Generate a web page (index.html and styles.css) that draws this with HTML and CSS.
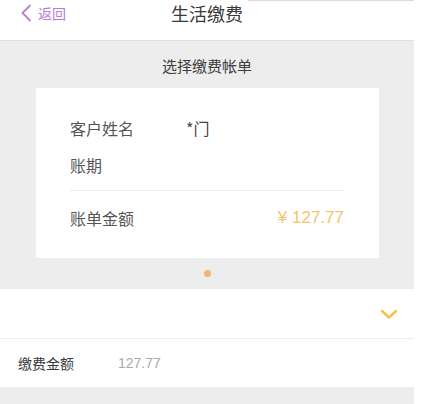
FILE: index.html
```html
<!DOCTYPE html>
<html lang="zh">
<head>
<meta charset="utf-8">
<link rel="stylesheet" href="styles.css">
</head>
<body>
<div class="page">
  <header class="topbar">
    <a class="back">
      <svg class="back-icon" width="12" height="18" viewBox="0 0 12 18"><path d="M10 1.5 L2.5 9 L10 16.5" fill="none" stroke="#b77ddb" stroke-width="1.8" stroke-linecap="round" stroke-linejoin="round"/></svg>
      <span>返回</span>
    </a>
    <h1 class="title">生活缴费</h1>
  </header>
  <section class="bills">
    <div class="bills-title">选择缴费帐单</div>
    <div class="card">
      <div class="card-row"><span class="label">客户姓名</span><span class="value">*门</span></div>
      <div class="card-row period"><span class="label">账期</span></div>
      <div class="card-sep"></div>
      <div class="card-row amount-row"><span class="label">账单金额</span><span class="amount">¥ 127.77</span></div>
    </div>
    <div class="dots"><span class="dot"></span></div>
  </section>
  <div class="select-row">
    <svg width="18" height="12" viewBox="0 0 18 12"><path d="M2 3 L9 9.5 L16 3" fill="none" stroke="#f5c14a" stroke-width="2.4" stroke-linecap="round" stroke-linejoin="round"/></svg>
  </div>
  <div class="pay-row">
    <span class="pay-label">缴费金额</span>
    <span class="pay-value">127.77</span>
  </div>
  <div class="footer-gray"></div>
</div>
</body>
</html>
```
FILE: styles.css
```css
* { box-sizing: border-box; margin: 0; padding: 0; }
html, body { background: #fff; }
body {
  font-family: "Noto Sans CJK SC", "Liberation Sans", sans-serif;
  width: 430px;
  height: 404px;
  overflow: hidden;
}
.page { width: 414px; }
.topbar {
  position: relative;
  height: 40px;
  display: flex;
  align-items: center;
  justify-content: center;
  background: #fff;
}
.topbar::before {
  content: "";
  position: absolute;
  top: 0;
  left: 248px;
  right: 0;
  height: 1px;
  background: #dcdcdc;
}
.back {
  position: absolute;
  left: 20px;
  top: 3px;
  display: flex;
  align-items: center;
  gap: 6px;
  color: #b77ddb;
  font-size: 14px;
}
.title {
  font-size: 18px;
  font-weight: normal;
  color: #3a3a3a;
  margin-top: -14px;
}
.bills {
  background: #ededed;
  border-top: 1px solid #e0e0e0;
  padding-top: 13px;
  height: 249px;
}
.bills-title {
  text-align: center;
  font-size: 15px;
  color: #3c3c3c;
  line-height: 24px;
}
.card {
  background: #fff;
  margin: 10px 35px 0 36px;
  height: 170px;
  padding: 28px 35px 0 34px;
}
.card-row {
  display: flex;
  align-items: center;
  font-size: 16px;
  color: #555;
  line-height: 24px;
}
.card-row .value { margin-left: 52px; color: #444; }
.period { margin-top: 13px; }
.card-sep {
  height: 1px;
  background: #eaeaea;
  margin-top: 13px;
}
.amount-row {
  justify-content: space-between;
  margin-top: 15px;
}
.amount {
  color: #f5c46a;
  font-family: "Liberation Sans", sans-serif;
  font-size: 17px;
}
.dots {
  display: flex;
  justify-content: center;
  padding-top: 12px;
}
.dot {
  width: 7px;
  height: 7px;
  border-radius: 50%;
  background: #f5b46e;
}
.select-row {
  height: 50px;
  display: flex;
  align-items: center;
  justify-content: flex-end;
  padding-right: 16px;
  border-bottom: 1px solid #eeeeee;
  background: #fff;
}
.pay-row {
  height: 48px;
  display: flex;
  align-items: center;
  padding-left: 18px;
  background: #fff;
}
.pay-label {
  font-size: 14px;
  color: #3a3a3a;
  width: 100px;
}
.pay-value {
  font-size: 14px;
  color: #aaa;
  font-family: "Liberation Sans", sans-serif;
}
.footer-gray {
  height: 20px;
  background: #ededed;
}
```
